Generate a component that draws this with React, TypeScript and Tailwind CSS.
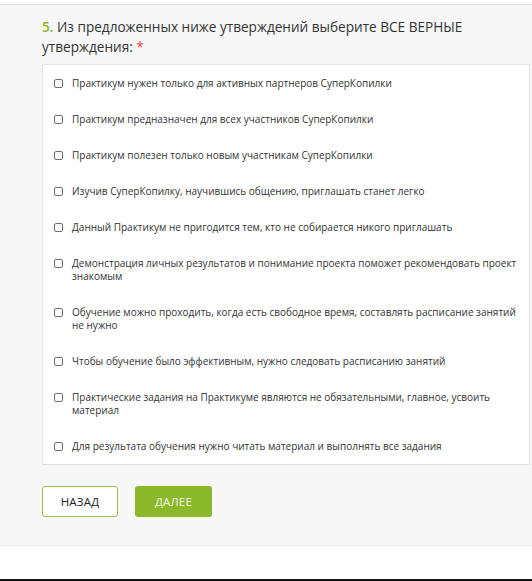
import React from "react";

const options: string[][] = [
  ["Практикум нужен только для активных партнеров СуперКопилки"],
  ["Практикум предназначен для всех участников СуперКопилки"],
  ["Практикум полезен только новым участникам СуперКопилки"],
  ["Изучив СуперКопилку, научившись общению, приглашать станет легко"],
  ["Данный Практикум не пригодится тем, кто не собирается никого приглашать"],
  ["Демонстрация личных результатов и понимание проекта поможет рекомендовать проект", "знакомым"],
  ["Обучение можно проходить, когда есть свободное время, составлять расписание занятий", "не нужно"],
  ["Чтобы обучение было эффективным, нужно следовать расписанию занятий"],
  ["Практические задания на Практикуме являются не обязательными, главное, усвоить", "материал"],
  ["Для результата обучения нужно читать материал и выполнять все задания"],
];

export default function App() {
  return (
    <div className="w-[532px] h-[581px] bg-white flex flex-col overflow-hidden" style={{ fontFamily: '"Open Sans", "Noto Sans", sans-serif' }}>
      <div className="h-[5px] bg-white border-b border-[#dcdcdc]" />
      <div className="bg-[#f7f7f7] pl-[42px] pr-[2px] pt-[12px] pb-[28px] border-b border-[#e6e6e6]">
        <h2 className="text-[13.6px] leading-[20px] font-medium text-[#333] whitespace-nowrap">
          <span className="text-[#8cb82b] font-semibold">5.</span> Из предложенных ниже утверждений выберите ВСЕ ВЕРНЫЕ
          <br />
          утверждения: <span className="text-[#e04848]">*</span>
        </h2>
        <div className="mt-[7px] bg-white border border-[#e3e3e3]">
          {options.map((lines, i) => (
            <label key={i} className="flex items-start pl-[11px] py-[11.5px] cursor-pointer">
              <span className="mt-[2px] w-[9px] h-[9px] shrink-0 border border-[#6f6f6f] rounded-[2px] bg-white" />
              <span className="ml-[9px] text-[10px] leading-[13px] text-[#333] whitespace-nowrap">
                {lines.map((l, j) => (
                  <React.Fragment key={j}>
                    {j > 0 && <br />}
                    {l}
                  </React.Fragment>
                ))}
              </span>
            </label>
          ))}
        </div>
        <div className="flex gap-[17px] mt-[21px]">
          <button className="w-[76px] h-[31px] rounded-[3px] border border-[#9cbc5c] bg-white text-[11.5px] font-medium text-[#222] tracking-[0.2px]">
            НАЗАД
          </button>
          <button className="w-[77px] h-[31px] rounded-[3px] bg-[#8cb82b] text-[11.5px] font-medium text-[#f1f7e4] tracking-[0.2px]">
            ДАЛЕЕ
          </button>
        </div>
      </div>
      <div className="flex-1 bg-white" />
      <div className="h-[2px] bg-[#111]" />
    </div>
  );
}
